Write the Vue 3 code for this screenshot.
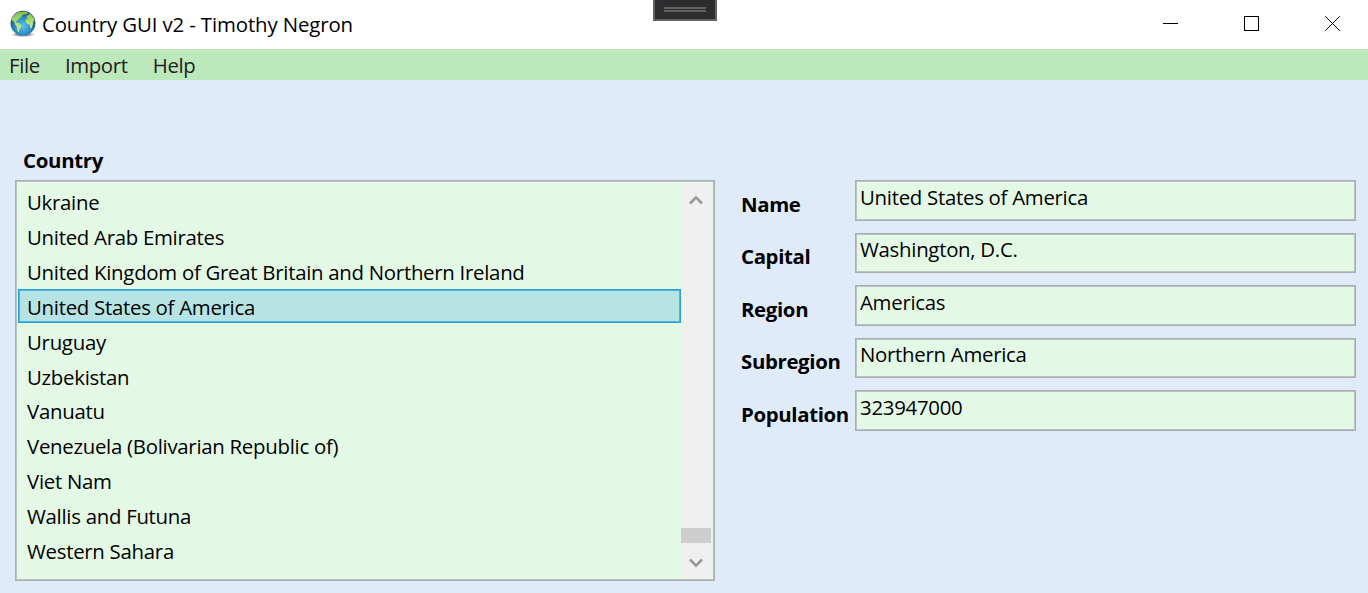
<script setup>
const menus = ['File', 'Import', 'Help']

const countries = [
  'Ukraine',
  'United Arab Emirates',
  'United Kingdom of Great Britain and Northern Ireland',
  'United States of America',
  'Uruguay',
  'Uzbekistan',
  'Vanuatu',
  'Venezuela (Bolivarian Republic of)',
  'Viet Nam',
  'Wallis and Futuna',
  'Western Sahara',
]
const selected = 'United States of America'

const fields = [
  { label: 'Name', value: 'United States of America' },
  { label: 'Capital', value: 'Washington, D.C.' },
  { label: 'Region', value: 'Americas' },
  { label: 'Subregion', value: 'Northern America' },
  { label: 'Population', value: '323947000' },
]
</script>

<template>
  <div class="window">
    <header class="titlebar">
      <svg class="globe" width="28" height="28" viewBox="0 0 28 28">
        <defs>
          <radialGradient id="sea" cx="0.5" cy="0.62" r="0.6">
            <stop offset="0" stop-color="#58c4ee" />
            <stop offset="0.55" stop-color="#2c8fc8" />
            <stop offset="1" stop-color="#123c5e" />
          </radialGradient>
          <linearGradient id="land" x1="0" y1="0" x2="0" y2="1">
            <stop offset="0" stop-color="#7fc242" />
            <stop offset="1" stop-color="#d6ee9a" />
          </linearGradient>
          <radialGradient id="shade">
            <stop offset="0.5" stop-color="#8d9194" />
            <stop offset="1" stop-color="#ffffff" />
          </radialGradient>
        </defs>
        <ellipse cx="14" cy="24.500" rx="12" ry="2.600" fill="url(#shade)" />
        <circle cx="14" cy="13.200" r="12.400" fill="url(#sea)" />
        <path fill="url(#land)" d="M2.500 9.500C4 5.500 7.500 2.500 11 1.700L17 1.500L19 3L17 4.500L15 4L13 5.500L12 7.500L10 8.500L9 10.500L7 11L7.500 12.500L10 13L12.500 15L12 17.500L10.500 19L9.800 22.500L8.500 21L7.800 17L6 14L5 11.500L3 10.800Z" />
        <path fill="url(#land)" d="M19.500 3C22 4.200 24 6.500 25 9L25.500 11L24 11.500L24 14L22.500 18L21.500 18.500L20.500 14.500L18 14L16.500 11.500L17 9L19 8L17.500 7L18 5.500L20 5Z" />
      </svg>
      <h1 class="title">Country GUI v2 - Timothy Negron</h1>
      <div class="grip"><span></span></div>
      <div class="controls">
        <svg width="15" height="15" viewBox="0 0 15 15"><path d="M0 7.500H15" /></svg>
        <svg width="15" height="15" viewBox="0 0 15 15"><rect x="0.500" y="0.500" width="14" height="14" /></svg>
        <svg width="15" height="15" viewBox="0 0 15 15"><path d="M0.200 0.200L14.800 14.800M14.800 0.200L0.200 14.800" /></svg>
      </div>
    </header>

    <nav class="menubar">
      <span v-for="m in menus" :key="m">{{ m }}</span>
    </nav>

    <main class="content">
      <section class="countries">
        <h2 class="heading">Country</h2>
        <div class="listbox">
          <ul class="items">
            <li v-for="c in countries" :key="c" :class="{ selected: c === selected }"><span>{{ c }}</span></li>
          </ul>
          <div class="scrollbar">
            <svg width="14" height="12" viewBox="0 0 14 12"><path d="M1 9.500L7 3.300L13 9.500" /></svg>
            <div class="thumb"></div>
            <svg width="14" height="12" viewBox="0 0 14 12"><path d="M1 2.500L7 8.700L13 2.500" /></svg>
          </div>
        </div>
      </section>

      <section class="details">
        <div v-for="f in fields" :key="f.label" class="field">
          <span class="label">{{ f.label }}</span>
          <div class="box"><span class="value">{{ f.value }}</span></div>
        </div>
      </section>
    </main>
  </div>
</template>

<style>
body {
  margin: 0;
  overflow: hidden;
}
</style>

<style scoped>
.window {
  width: 1368px;
  height: 593px;
  display: flex;
  flex-direction: column;
  background: #e0ebfa;
  color: #000;
  font-family: "Open Sans", "Noto Sans", sans-serif;
  font-size: 20.400px;
  letter-spacing: -0.280px;
  overflow: hidden;
}
.titlebar {
  position: relative;
  height: 49px;
  display: flex;
  align-items: center;
  background: #fff;
  flex: none;
}
.globe {
  margin: -1px 0 0 9px;
}
.title {
  margin: -2px 0 0 5px;
  font-size: 20.400px;
  font-weight: 400;
  line-height: 28px;
  letter-spacing: -0.120px;
  white-space: nowrap;
}
.grip {
  position: absolute;
  left: 653px;
  top: 0;
  width: 60px;
  height: 19px;
  border: 2px solid #636363;
  border-top: 0;
  background: #2d2d30;
}
.grip span {
  display: block;
  width: 42px;
  height: 1px;
  margin: 7px auto 0;
  border: 2px solid #636363;
  border-width: 2px 0;
}
.controls {
  display: flex;
  gap: 66px;
  margin: -2px 28px 0 auto;
}
.controls svg {
  fill: none;
  stroke: #000;
  stroke-width: 1;
}
.menubar {
  height: 31px;
  display: flex;
  gap: 25px;
  padding-left: 9px;
  background: #bde8bb;
  color: #212121;
  line-height: 33px;
  letter-spacing: -0.350px;
  flex: none;
}
.content {
  display: flex;
  flex: 1;
  padding: 65px 12px 12px 15px;
}
.countries {
  width: 700px;
  flex: none;
}
.heading {
  margin: 0;
  height: 35px;
  padding-left: 8px;
  font-size: 20.400px;
  line-height: 30px;
}
.listbox {
  box-sizing: border-box;
  height: 401px;
  display: flex;
  border: 1px solid #abadb3;
  box-shadow: inset 0 0 0 1px #b9c2bf;
  padding: 1px;
  background: #e4f9e5;
}
.items {
  flex: 1;
  margin: 0;
  padding: 2.100px 0 0 1px;
  list-style: none;
}
.items li {
  height: 34.900px;
  padding-left: 9px;
  line-height: 36.600px;
  white-space: nowrap;
}
.items li.selected {
  box-sizing: border-box;
  height: 33.900px;
  margin-bottom: 1px;
  border: 1px solid #26a0da;
  box-shadow: inset 0 0 0 1px #4fb3de;
  padding-left: 8px;
  line-height: 35px;
  background: #b6e3e3;
}
.scrollbar {
  width: 30px;
  margin: 1px 2px 1px 0;
  display: flex;
  flex-direction: column;
  align-items: center;
  background: #f0f0f0;
}
.scrollbar svg {
  fill: none;
  stroke: #999;
  stroke-width: 2.600;
  margin: 11px 0;
}
.scrollbar svg:last-child {
  margin: 14px 0 9px;
}
.thumb {
  width: 30px;
  height: 15px;
  margin-top: auto;
  background: #cdcdcd;
}
.details {
  flex: 1;
  margin: 35px 0 0 26px;
}
.field {
  height: 52.500px;
  display: flex;
}
.label {
  width: 114px;
  margin-top: -0.200px;
  font-weight: 700;
  line-height: 48px;
  letter-spacing: -0.350px;
}
.box {
  box-sizing: border-box;
  display: flex;
  flex: 1;
  height: 40.500px;
  padding-left: 4px;
  border: 1px solid #abadb3;
  box-shadow: inset 0 0 0 1px #b9c2bf;
  background: #e4f9e5;
}
.value {
  margin-top: -0.200px;
  line-height: 33px;
}
</style>
